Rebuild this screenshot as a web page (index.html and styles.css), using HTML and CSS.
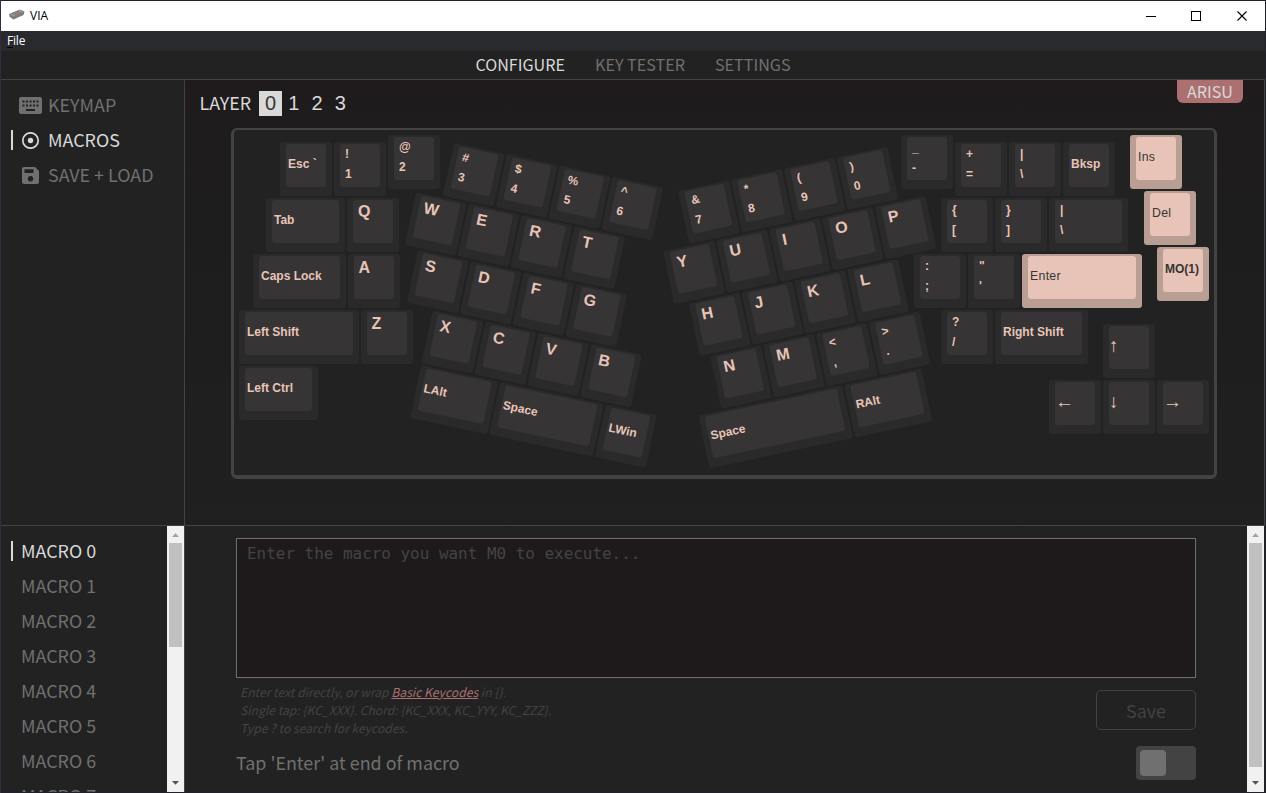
FILE: index.html
```html
<!DOCTYPE html>
<html lang="en">
<head>
<meta charset="utf-8">
<title>VIA</title>
<link rel="stylesheet" href="styles.css">
</head>
<body>
<div class="window">
  <header class="titlebar">
    <svg class="app-icon" width="16" height="12" viewBox="0 0 16 12"><path d="M0 5 11 0.5 15.5 2.5 14.5 6 4.5 10.5 0.8 8Z" fill="#7d7b7b"/><path d="M1 5.2 11 1 14.500 2.700 4.500 7.200Z" fill="#a3a09f"/><path d="M4 5.500 11 2.500M3 4.700 9 2.200M6 6 13 2.800" stroke="#696767" stroke-dasharray="1.500 1"/><path d="M7 4.500h2" stroke="#c4615f"/></svg>
    <span class="app-name">VIA</span>
    <svg class="win-buttons" width="104" height="12" viewBox="0 0 104 12" fill="none" stroke="#000" stroke-width="1"><path d="M1 6.500h10"/><rect x="46.500" y="1.500" width="9" height="9"/><path d="M92.500 1.500l9 9M101.500 1.500l-9 9" stroke-width="1.100"/></svg>
  </header>
  <div class="menubar"><span><u>F</u>ile</span></div>
  <nav class="tabs"><span class="on">CONFIGURE</span><span>KEY TESTER</span><span>SETTINGS</span></nav>

  <div class="upper">
    <aside class="side">
      <div class="item"><svg class="ico" width="23" height="17" viewBox="0 0 23 17"><path fill="currentColor" fill-rule="evenodd" d="M2 0h19a2 2 0 0 1 2 2v13a2 2 0 0 1-2 2H2a2 2 0 0 1-2-2V2a2 2 0 0 1 2-2ZM3.500 3.500v2h2v-2ZM7 3.500v2h2v-2ZM10.500 3.500v2h2v-2ZM14 3.500v2h2v-2ZM17.500 3.500v2h2v-2ZM3.500 7.500v2h2v-2ZM7 7.500v2h2v-2ZM10.500 7.500v2h2v-2ZM14 7.500v2h2v-2ZM17.500 7.500v2h2v-2ZM7 12v2h9v-2Z"/></svg><span>KEYMAP</span></div>
      <div class="item on"><svg class="ico" width="23" height="17" viewBox="0 0 23 17"><circle cx="11.500" cy="8.500" r="7.700" fill="none" stroke="currentColor" stroke-width="1.700"/><circle cx="11.500" cy="8.500" r="2.700" fill="currentColor"/></svg><span>MACROS</span></div>
      <div class="item"><svg class="ico" width="23" height="17" viewBox="0 0 23 17"><path fill="currentColor" fill-rule="evenodd" d="M5 0h11l4 4v11a2 2 0 0 1-2 2H5a2 2 0 0 1-2-2V2a2 2 0 0 1 2-2ZM5.500 2.200v3.800h9v-3.800ZM11.500 9a2.800 2.800 0 1 0 .01 0Z"/></svg><span>SAVE + LOAD</span></div>
    </aside>
    <main class="stage">
      <div class="stage-head">
        <div class="layers"><span class="layers-label">LAYER</span><b class="on">0</b><b>1</b><b>2</b><b>3</b></div>
        <div class="badge">ARISU</div>
      </div>
      <div class="board">
        <div class="row r-esc"><div class="key"><i class="word">Esc `</i></div><div class="key"><i class="duo">!<br>1</i></div></div>
        <div class="row r-two"><div class="key"><i class="duo">@<br>2</i></div></div>
        <div class="row r-tab"><div class="key w150"><i class="word">Tab</i></div><div class="key"><i class="letter">Q</i></div></div>
        <div class="row r-caps"><div class="key w175"><i class="word">Caps Lock</i></div><div class="key"><i class="letter">A</i></div></div>
        <div class="row r-shift"><div class="key w225"><i class="word">Left Shift</i></div><div class="key"><i class="letter">Z</i></div></div>
        <div class="row r-ctrl"><div class="key w150"><i class="word">Left Ctrl</i></div></div>

        <div class="wing wing-l">
          <div class="row l1"><div class="key"><i class="duo">#<br>3</i></div><div class="key"><i class="duo">$<br>4</i></div><div class="key"><i class="duo">%<br>5</i></div><div class="key"><i class="duo">^<br>6</i></div></div>
          <div class="row l2"><div class="key"><i class="letter">W</i></div><div class="key"><i class="letter">E</i></div><div class="key"><i class="letter">R</i></div><div class="key"><i class="letter">T</i></div></div>
          <div class="row l3"><div class="key"><i class="letter">S</i></div><div class="key"><i class="letter">D</i></div><div class="key"><i class="letter">F</i></div><div class="key"><i class="letter">G</i></div></div>
          <div class="row l4"><div class="key"><i class="letter">X</i></div><div class="key"><i class="letter">C</i></div><div class="key"><i class="letter">V</i></div><div class="key"><i class="letter">B</i></div></div>
          <div class="row l5"><div class="key w150"><i class="word">LAlt</i></div><div class="key w200"><i class="word">Space</i></div><div class="key"><i class="word">LWin</i></div></div>
        </div>

        <div class="wing wing-r">
          <div class="row q1"><div class="key"><i class="duo">&amp;<br>7</i></div><div class="key"><i class="duo">*<br>8</i></div><div class="key"><i class="duo">(<br>9</i></div><div class="key"><i class="duo">)<br>0</i></div></div>
          <div class="row q2"><div class="key"><i class="letter">Y</i></div><div class="key"><i class="letter">U</i></div><div class="key"><i class="letter">I</i></div><div class="key"><i class="letter">O</i></div><div class="key"><i class="letter">P</i></div></div>
          <div class="row q3"><div class="key"><i class="letter">H</i></div><div class="key"><i class="letter">J</i></div><div class="key"><i class="letter">K</i></div><div class="key"><i class="letter">L</i></div></div>
          <div class="row q4"><div class="key"><i class="letter">N</i></div><div class="key"><i class="letter">M</i></div><div class="key"><i class="duo">&lt;<br>,</i></div><div class="key"><i class="duo">&gt;<br>.</i></div></div>
          <div class="row q5"><div class="key w275"><i class="word">Space</i></div><div class="key w150"><i class="word">RAlt</i></div></div>
        </div>

        <div class="row r-minus"><div class="key"><i class="duo dashes">_<br>-</i></div></div>
        <div class="row r-plus"><div class="key"><i class="duo">+<br>=</i></div><div class="key"><i class="duo">|<br>\</i></div><div class="key"><i class="word">Bksp</i></div></div>
        <div class="row r-brace"><div class="key"><i class="duo">{<br>[</i></div><div class="key"><i class="duo">}<br>]</i></div><div class="key w150"><i class="duo">|<br>\</i></div></div>
        <div class="row r-colon"><div class="key"><i class="duo">:<br>;</i></div><div class="key"><i class="duo">"<br>'</i></div><div class="key w225 accent"><i class="word thin">Enter</i></div></div>
        <div class="row r-slash"><div class="key"><i class="duo">?<br>/</i></div><div class="key w175"><i class="word">Right Shift</i></div></div>
        <div class="row r-up"><div class="key"><i class="arrow">↑</i></div></div>
        <div class="row r-arrows"><div class="key"><i class="arrow">←</i></div><div class="key"><i class="arrow">↓</i></div><div class="key"><i class="arrow">→</i></div></div>
        <div class="row r-ins"><div class="key accent"><i class="word thin">Ins</i></div></div>
        <div class="row r-del"><div class="key accent"><i class="word thin">Del</i></div></div>
        <div class="row r-mo"><div class="key accent"><i class="word">MO(1)</i></div></div>
      </div>
    </main>
  </div>

  <div class="lower">
    <aside class="macros">
      <div class="macro-list">
        <div class="item on"><span>MACRO 0</span></div><div class="item"><span>MACRO 1</span></div><div class="item"><span>MACRO 2</span></div><div class="item"><span>MACRO 3</span></div><div class="item"><span>MACRO 4</span></div><div class="item"><span>MACRO 5</span></div><div class="item"><span>MACRO 6</span></div><div class="item"><span>MACRO 7</span></div>
      </div>
      <div class="scroll"><svg width="17" height="17" viewBox="0 0 17 17"><path d="M5 11h7L8.500 7.200Z" fill="#a3a3a3"/></svg><div class="thumb thumb-short"></div><svg class="down" width="17" height="17" viewBox="0 0 17 17"><path d="M5 6h7L8.500 9.800Z" fill="#505050"/></svg></div>
    </aside>
    <section class="editor">
      <div class="pane">
        <div class="macro-text">Enter the macro you want M0 to execute...</div>
        <div class="under">
          <div class="hint">Enter text directly, or wrap <a>Basic Keycodes</a> in {}.<br>Single tap: {KC_XXX}. Chord: {KC_XXX, KC_YYY, KC_ZZZ}.<br>Type ? to search for keycodes.</div>
          <div class="save">Save</div>
        </div>
        <div class="option"><span>Tap 'Enter' at end of macro</span><div class="toggle"><div class="knob"></div></div></div>
      </div>
      <div class="scroll"><svg width="17" height="17" viewBox="0 0 17 17"><path d="M5 11h7L8.500 7.200Z" fill="#a3a3a3"/></svg><div class="thumb thumb-long"></div><svg class="down" width="17" height="17" viewBox="0 0 17 17"><path d="M5 6h7L8.500 9.800Z" fill="#505050"/></svg></div>
    </section>
  </div>
</div>
</body>
</html>
```

FILE: styles.css
```css
* { box-sizing: border-box; }
body {
  margin: 0;
  width: 1266px;
  height: 793px;
  padding: 1px 1px 1px 1px;
  overflow: hidden;
  background: linear-gradient(90deg, #372a3e 0, #372a3e 1px, #20212a 1px);
  font-family: "Noto Sans CJK SC", "Open Sans", sans-serif;
  color: #717070;
}
.window { width: 1264px; height: 791px; background: #222; display: flex; flex-direction: column; }

.titlebar { flex: none; height: 30px; background: #fff; display: flex; align-items: center; padding: 0 16px 0 8px; }
.app-icon { margin-top: -3px; }
.app-name { margin-left: 5px; color: #000; font: 12px/16px "Open Sans", sans-serif; flex: 1; }
.win-buttons { margin-top: -1px; }
.menubar { flex: none; height: 20px; background: #292a2d; color: #fff; font: 12px/19px "Open Sans", sans-serif; letter-spacing: -0.2px; padding-left: 6px; }
.menubar u { text-decoration-color: #000; text-underline-offset: 2px; }
.tabs { flex: none; height: 29px; border-bottom: 1px solid #434343; display: flex; justify-content: center; gap: 30px; font-size: 16.15px; line-height: 26px; }
.on { color: #d9d9d9; }

.upper { flex: none; height: 445px; display: flex; }
.side { width: 184px; border-right: 1px solid #434343; padding-top: 8px; }
.item { height: 35px; padding-left: 18px; display: flex; align-items: center; gap: 6px; font-size: 17.9px; line-height: 33px; position: relative; }
.item span { height: 35px; }
.item.on::before { content: ""; position: absolute; left: 10px; top: 7px; width: 2px; height: 20px; background: #d9d9d9; }
.item .ico { flex: none; }
.stage { flex: 1; background: linear-gradient(#1f1b1c, #1e1d1d 30%, #212020); border-right: 1px solid #434343; }
.stage-head { height: 48px; display: flex; justify-content: space-between; align-items: flex-start; padding: 0 21px 0 14.4px; }
.layers { display: flex; padding-top: 11px; color: #d9d9d9; font-size: 17.9px; line-height: 23px; }
.layers-label { width: 59.600px; }
.layers b { width: 23px; height: 25px; margin-right: 0.300px; text-align: center; font: 20px/25px "Liberation Sans", Arial, sans-serif; }
.layers b.on { background: #d9d9d9; color: #363434; }
.badge { width: 66px; height: 23px; background: #ad7070; color: #d9d9d9; border-radius: 0 0 6px 6px; text-align: center; font-size: 16.1px; line-height: 22px; }

.board { position: relative; width: 986px; height: 351px; margin-left: 46px; background: #222; border: solid #434343; border-width: 2px 3px 4px 3px; border-radius: 6px; }
.row { position: absolute; display: flex; gap: 2px; }
.wing { position: absolute; width: 0; height: 0; transform-origin: 0 0; }
.wing-l { left: 219.5px; top: 13px; transform: rotate(12deg); }
.wing-r { left: 443.7px; top: 60.5px; transform: rotate(-12deg); }
.key { flex: none; width: 52px; height: 54px; padding: 2px 6px 9px; border-radius: 3px; background: #2a2a2a; color: #e8c4b8; }
.key > i { display: block; width: 100%; height: 43px; border-radius: 3px; background: #363434; font: bold 12px/19.800px "Liberation Sans", Arial, sans-serif; white-space: nowrap; }
.key > .word { padding-left: 2px; line-height: 40px; }
.key > .thin { font-weight: normal; font-size: 12.3px; letter-spacing: 0.300px; }
.key > .duo { padding-left: 5px; line-height: 20px; }
.key > .dashes { padding-top: 1px; }
.key > .letter { padding-left: 5px; font-size: 16px; line-height: 23px; }
.key > .arrow { padding-left: 0; line-height: 40px; font-size: 19px; font-weight: normal; }
.key.accent { background: #b99e93; color: #363434; }
.key.accent > i { background: #e8c4b8; }
.w150 { width: 79px; }
.w175 { width: 92.5px; }
.w200 { width: 106px; }
.w225 { width: 119.5px; }
.w275 { width: 146.5px; }

.r-esc { left: 46px; top: 12px; }
.r-two { left: 154px; top: 5px; }
.r-tab { left: 32px; top: 68px; }
.r-caps { left: 19px; top: 124px; }
.r-shift { left: 5px; top: 180px; }
.r-ctrl { left: 5px; top: 236px; }
.r-minus { left: 667px; top: 5px; }
.r-plus { left: 721px; top: 12px; }
.r-brace { left: 707px; top: 68px; }
.r-colon { left: 680px; top: 124px; }
.r-slash { left: 707px; top: 180px; }
.r-up { left: 869px; top: 194px; }
.r-arrows { left: 815px; top: 250px; }
.r-ins { left: 896px; top: 5px; }
.r-del { left: 910px; top: 61px; }
.r-mo { left: 923px; top: 117px; }
.l1, .q1 { left: 0; top: 0; }
.l2, .q2 { left: -27px; top: 56px; }
.l3, .q3 { left: -13.5px; top: 112px; }
.l4 { left: 13.5px; top: 168px; }
.l5 { left: 13.5px; top: 224px; }
.q4 { left: -3px; top: 168px; }
.q5 { left: -27px; top: 224px; }

.lower { flex: none; height: 267px; display: flex; border-top: 1px solid #434343; }
.macros { width: 184px; border-right: 1px solid #434343; display: flex; overflow: hidden; }
.macro-list { flex: 1; padding-top: 8px; overflow: hidden; height: 266px; }
.macro-list .item { padding-left: 20px; }
.scroll { flex: none; width: 17px; height: 266px; background: #f1f1f1; display: flex; flex-direction: column; align-items: center; }
.scroll svg { flex: none; }
.thumb { width: 13px; background: #c1c1c1; }
.thumb-short { height: 104px; }
.thumb-long { height: 224px; }
.scroll .down { margin-top: auto; }
.editor { flex: 1; display: flex; padding-right: 1px; }
.pane { flex: 1; padding: 12px 51px 0; }
.macro-text { height: 140px; border: 1px solid #717070; background: #1e1a1b; color: #444; padding: 5px 10px; font: 15.950px/20px "DejaVu Sans Mono", monospace; }
.under { display: flex; justify-content: space-between; padding: 5px 0 0 4px; }
.hint { font-size: 12.15px; line-height: 18px; font-style: italic; color: #434343; white-space: nowrap; }
.hint a { color: #ad7070; text-decoration: underline; }
.save { flex: none; width: 100px; height: 40px; margin-top: 7px; border: 1px solid #434343; border-radius: 5px; text-align: center; font-size: 17.9px; line-height: 38px; color: #434343; }
.option { display: flex; justify-content: space-between; height: 34px; margin-top: 9px; font-size: 17.9px; line-height: 32px; }
.toggle { width: 60px; height: 34px; border-radius: 4px; background: #434343; padding: 4px; }
.knob { width: 26px; height: 26px; border-radius: 4px; background: #717070; }
```
